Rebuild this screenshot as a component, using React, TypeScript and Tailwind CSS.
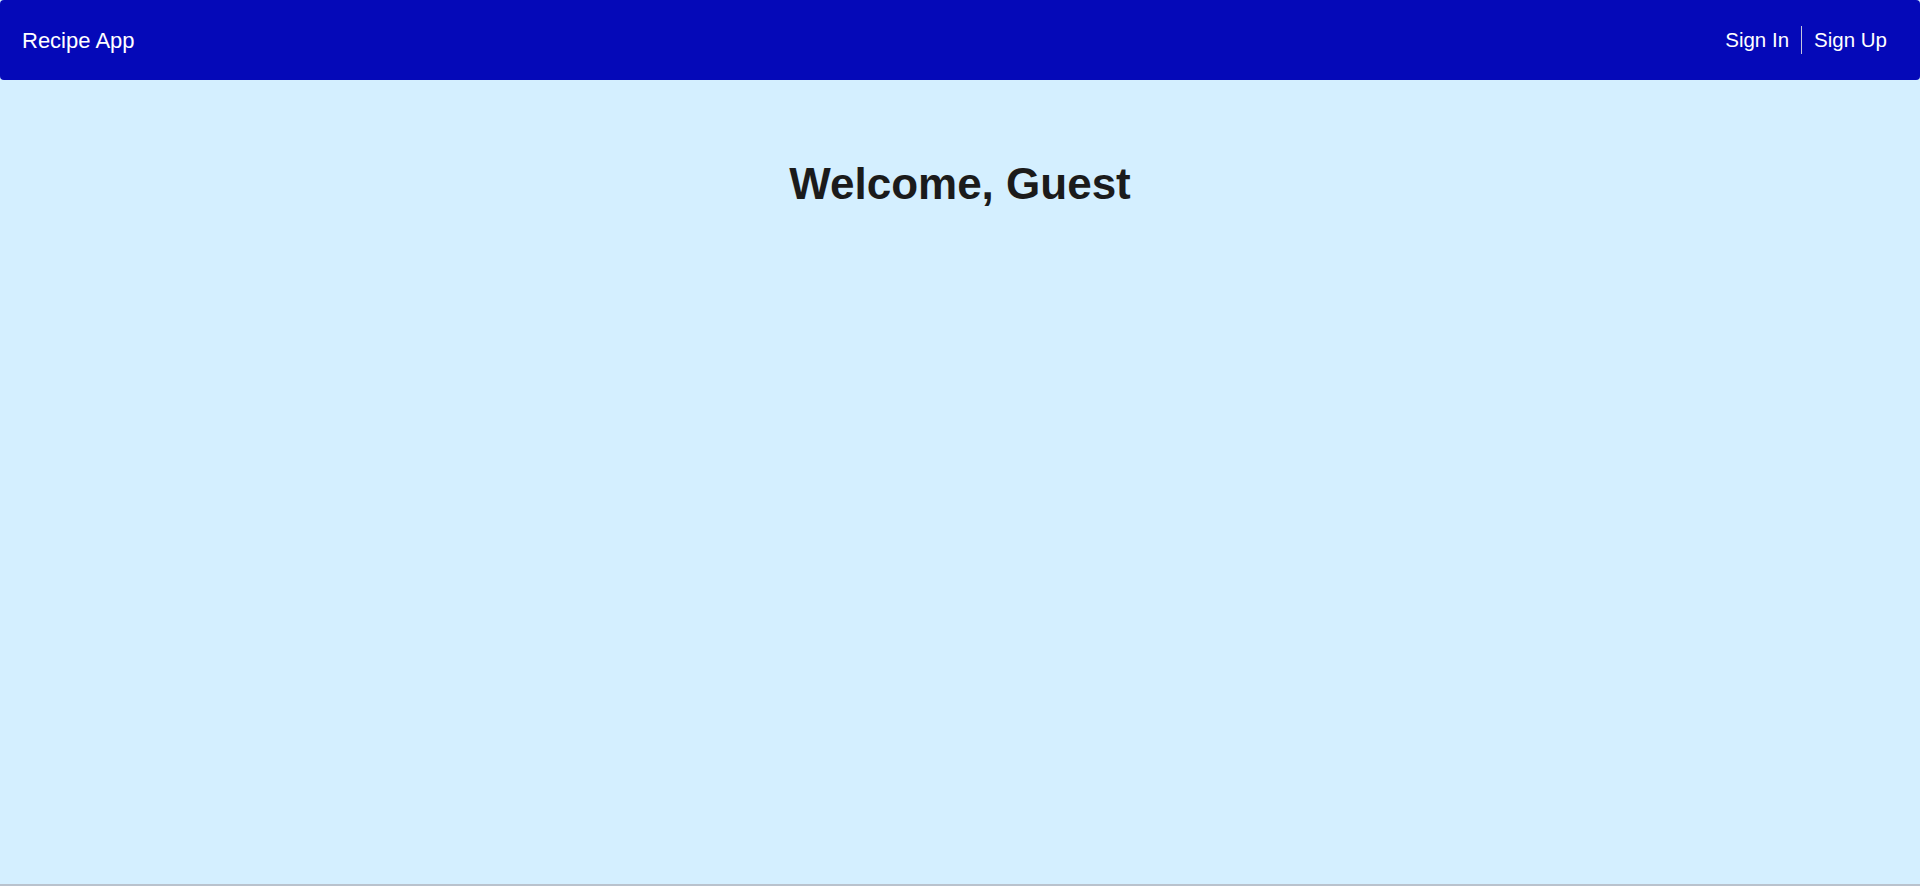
import React from "react";

const App: React.FC = () => {
  return (
    <div className="flex h-[886px] w-full flex-col bg-[#d4efff] font-['Liberation_Sans',Arial,sans-serif]">
      {/* Top bar */}
      <nav className="flex h-[80px] w-full items-center justify-between rounded-[4px] bg-[#0509b8] pl-[22px] pr-[33px] text-white">
        <a href="#" className="text-[22px] leading-normal">Recipe App</a>
        <div className="flex items-center text-[20.5px]">
          <a href="#" className="leading-normal">Sign In</a>
          <span className="mx-[12px] h-[28px] w-[1px] bg-[#c4c6de]" />
          <a href="#" className="leading-normal">Sign Up</a>
        </div>
      </nav>

      {/* Main */}
      <main className="flex flex-1 flex-col items-center pt-[79px]">
        <h1 className="text-[44px] font-bold leading-[50px] text-[#1b1b1b]">Welcome, Guest</h1>
      </main>

      <div className="h-[2px] w-full bg-[#b9c2cd]" />
    </div>
  );
};

export default App;
